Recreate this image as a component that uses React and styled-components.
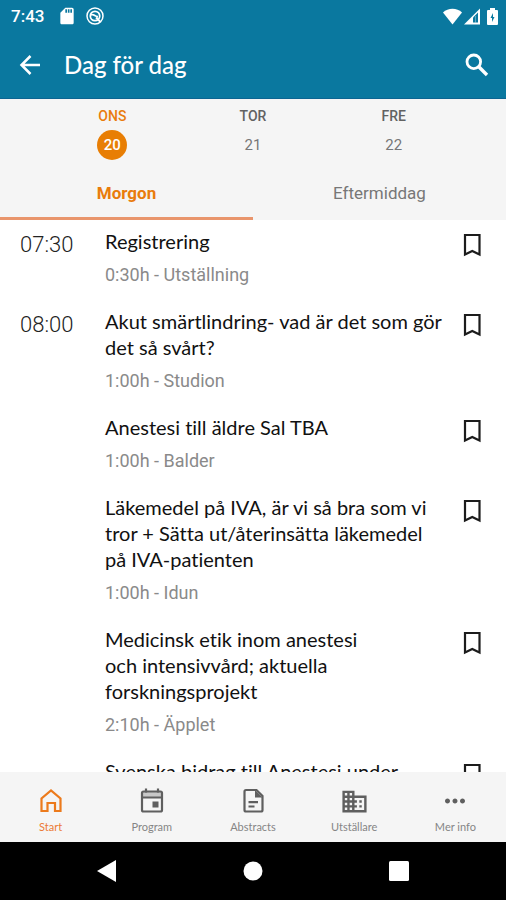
import React, { useState } from "react";
import styled, { createGlobalStyle } from "styled-components";
import { MdBusiness, MdMoreHoriz, MdSdCard } from "react-icons/md";

const ORANGE = "#e97c0c";
const TEAL = "#0a789f";

const GlobalStyle = createGlobalStyle`
  *, *::before, *::after { box-sizing: border-box; }
  body { margin: 0; background: #fff; font-family: Roboto, "Liberation Sans", sans-serif; }
  button { border: 0; padding: 0; background: none; font: inherit; color: inherit; cursor: pointer; }
  h1, h2, p { margin: 0; }
`;

const Screen = styled.div`
  display: flex;
  flex-direction: column;
  height: 100vh;
  overflow: hidden;
`;

const TopArea = styled.header`
  flex: none;
  background: ${TEAL};
  color: #fff;
  border-bottom: 1px solid #0c6592;
`;

const StatusBar = styled.div`
  display: flex;
  align-items: center;
  justify-content: space-between;
  height: 32px;
  padding: 0 8px 0 11px;
  font-size: 17px;
  font-weight: 500;
`;

const StatusGroup = styled.span`
  display: flex;
  align-items: center;
  gap: ${(p) => p.$gap}px;
  svg { display: block; }
`;

const Clock = styled.span`
  margin-right: 4px;
`;

const AppBar = styled.div`
  display: flex;
  align-items: center;
  height: 66px;
  padding: 0 15px 0 16px;
`;

const AppTitle = styled.h1`
  flex: 1;
  margin-left: 20px;
  font: 500 24px/32px Lato, sans-serif;
`;

const IconButton = styled.button`
  display: flex;
  align-items: center;
  justify-content: center;
  width: 28px;
  height: 28px;
  svg { flex: none; }
`;

const Filters = styled.div`
  flex: none;
  background: #f5f5f5;
`;

const Days = styled.div`
  display: grid;
  grid-template-columns: repeat(3, 1fr);
  padding: 7px 42px 0;
`;

const Day = styled.button`
  display: flex;
  flex-direction: column;
  align-items: center;
  gap: 4px;
  font-size: 14px;
  line-height: 20px;
  font-weight: 500;
  color: ${(p) => (p.$active ? ORANGE : "#626262")};
`;

const DayNumber = styled.span`
  width: 30px;
  height: 30px;
  border-radius: 50%;
  font-size: 15px;
  line-height: 30px;
  font-weight: ${(p) => (p.$active ? 500 : 400)};
  color: ${(p) => (p.$active ? "#fff" : "#777")};
  background: ${(p) => (p.$active ? "#e87e04" : "transparent")};
`;

const Tabs = styled.div`
  display: grid;
  grid-template-columns: 1fr 1fr;
  margin-top: 6px;
`;

const Tab = styled.button`
  height: 54px;
  padding-top: 2px;
  font-size: 17px;
  line-height: 24px;
  font-weight: ${(p) => (p.$active ? 700 : 400)};
  color: ${(p) => (p.$active ? ORANGE : "#777")};
  border-bottom: 3px solid ${(p) => (p.$active ? "#e9956c" : "transparent")};
`;

const Schedule = styled.main`
  flex: 1;
  min-height: 0;
  padding-top: 8px;
  overflow-y: auto;
  scrollbar-width: none;
`;

const Session = styled.article`
  display: grid;
  grid-template-columns: 85px 1fr 28px;
  padding: 0 20px 20px;
`;

const Time = styled.time`
  font-size: 22px;
  line-height: 34px;
  font-weight: 300;
  color: #222;
`;

const SessionTitle = styled.h2`
  font: 400 20px/26px Lato, sans-serif;
  font-variant-ligatures: none;
  color: #111;
  white-space: pre;
`;

const SessionMeta = styled.p`
  margin-top: 8px;
  font-size: 18px;
  line-height: 26px;
  font-weight: 400;
  color: #8a8a8a;
`;

const BookmarkButton = styled(IconButton)`
  margin-top: 3px;
  color: #1c1c1c;
`;

const BottomNav = styled.nav`
  flex: none;
  display: grid;
  grid-template-columns: repeat(5, 1fr);
  height: 70px;
  background: #f5f5f5;
`;

const NavItem = styled.button`
  display: flex;
  flex-direction: column;
  align-items: center;
  padding-top: 15px;
  gap: 5px;
  font: 400 11px/14px Lato, sans-serif;
  color: ${(p) => (p.$active ? "#ec7a35" : "#858585")};
`;

const NavIcon = styled.span`
  display: flex;
  align-items: center;
  justify-content: center;
  width: 30px;
  height: 28px;
  color: ${(p) => (p.$active ? "#ec7a1c" : "#5f5f5f")};
  svg { flex: none; }
`;

const SystemNav = styled.nav`
  flex: none;
  display: grid;
  grid-template-columns: repeat(3, 146px);
  justify-content: center;
  height: 58px;
  background: #000;
`;

const SystemButton = styled.button`
  display: flex;
  align-items: center;
  justify-content: center;
  color: #fff;
`;

const Icon = ({ strokeWidth = 2.2, children }) => (
  <svg width="28" height="28" viewBox="0 0 28 28" fill="none" stroke="currentColor" strokeWidth={strokeWidth} aria-hidden="true">
    {children}
  </svg>
);

const BackIcon = () => (
  <Icon strokeWidth={2.5}>
    <path d="M24 14H6M14.500 5L5.500 14l9 9" />
  </Icon>
);

const SearchIcon = () => (
  <Icon strokeWidth={2.800}>
    <circle cx="10.800" cy="10.800" r="6.800" />
    <path d="M15.800 15.800L24 24" strokeWidth="3.400" />
  </Icon>
);

const HomeIcon = () => (
  <Icon>
    <path d="M4.500 24V11.500L14 3.500l9.500 8V24H18v-8h-7.500v8z" />
  </Icon>
);

const CalendarIcon = () => (
  <Icon>
    <path d="M4 5h20v5H4z" fill="currentColor" stroke="none" opacity=".3" />
    <rect x="4" y="4.500" width="20" height="20" rx="1.500" />
    <path d="M4 10.500h20M8 1.500v4M20 1.500v4" />
    <rect x="14.500" y="14.500" width="6" height="6" fill="currentColor" stroke="none" />
  </Icon>
);

const DocumentIcon = () => (
  <Icon>
    <path d="M7 3h10.500l6 6v14a1.500 1.500 0 0 1-1.500 1.500H7A1.500 1.500 0 0 1 5.500 23V4.500A1.500 1.500 0 0 1 7 3z" />
    <path d="M16 3v7.500h7.500z" fill="currentColor" stroke="none" />
    <path d="M9.500 15.200h9.500M9.500 19.500h6" />
  </Icon>
);

const BookmarkIcon = () => (
  <Icon>
    <path d="M7 4h14.500v19.500l-7.250-3.500L7 23.500z" />
  </Icon>
);

const DataSaverIcon = () => (
  <svg width="18" height="18" viewBox="0 0 18 18" fill="none" stroke="currentColor" aria-hidden="true">
    <circle cx="9" cy="9" r="8" strokeWidth="1.500" />
    <circle cx="9" cy="9" r="4.700" strokeWidth="1.800" />
    <path d="M5 8c3-1.500 4 2 7 1.500M10 10.500l4.500 4.500" strokeWidth="1.800" />
  </svg>
);

const WifiIcon = () => (
  <svg width="19" height="17" viewBox="0 0 19 17" fill="currentColor" aria-hidden="true">
    <path d="M0 4.500C5-.5 14-.5 19 4.500L9.500 16.500z" />
  </svg>
);

const SignalIcon = () => (
  <svg width="16" height="17" viewBox="0 0 16 17" aria-hidden="true">
    <path d="M0 16.500L16 .5v16z" fill="currentColor" />
    <path d="M9 9.500l5-5V14.500H9z" fill={TEAL} />
    <path d="M11.500 8v6.500" stroke="currentColor" opacity=".35" />
  </svg>
);

const BatteryIcon = () => (
  <svg width="11" height="17" viewBox="0 0 11 17" aria-hidden="true">
    <path d="M3 0h5v2h2a1 1 0 0 1 1 1v13a1 1 0 0 1-1 1H1a1 1 0 0 1-1-1V3a1 1 0 0 1 1-1h2z" fill="currentColor" />
    <path d="M6 5L3.500 10H5v4l2.500-5H6z" fill={TEAL} />
  </svg>
);

const days = [["ONS", 20], ["TOR", 21], ["FRE", 22]];

const sessions = [
  { time: "07:30", title: "Registrering", meta: "0:30h - Utställning" },
  { time: "08:00", title: "Akut smärtlindring- vad är det som gör\ndet så svårt?", meta: "1:00h - Studion" },
  { title: "Anestesi till äldre Sal TBA", meta: "1:00h - Balder" },
  { title: "Läkemedel på IVA, är vi så bra som vi\ntror + Sätta ut/återinsätta läkemedel\npå IVA-patienten", meta: "1:00h - Idun" },
  { title: "Medicinsk etik inom anestesi\noch intensivvård; aktuella\nforskningsprojekt", meta: "2:10h - Äpplet" },
  { title: "Svenska bidrag till Anestesi under" },
];

const navItems = [
  ["Start", <HomeIcon />],
  ["Program", <CalendarIcon />],
  ["Abstracts", <DocumentIcon />],
  ["Utställare", <MdBusiness size={29} />],
  ["Mer info", <MdMoreHoriz size={30} />],
];

export default function App() {
  const [day, setDay] = useState(20);
  const [tab, setTab] = useState("Morgon");
  const [section, setSection] = useState("Start");

  return (
    <Screen>
      <GlobalStyle />
      <TopArea>
        <StatusBar>
          <StatusGroup $gap={9}>
            <Clock>7:43</Clock>
            <MdSdCard size={20} />
            <DataSaverIcon />
          </StatusGroup>
          <StatusGroup $gap={7}>
            <StatusGroup $gap={2}>
              <WifiIcon />
              <SignalIcon />
            </StatusGroup>
            <BatteryIcon />
          </StatusGroup>
        </StatusBar>
        <AppBar>
          <IconButton aria-label="Tillbaka"><BackIcon /></IconButton>
          <AppTitle>Dag för dag</AppTitle>
          <IconButton aria-label="Sök"><SearchIcon /></IconButton>
        </AppBar>
      </TopArea>

      <Filters>
        <Days>
          {days.map(([name, number]) => (
            <Day key={name} $active={day === number} aria-pressed={day === number} onClick={() => setDay(number)}>
              <span>{name}</span>
              <DayNumber $active={day === number}>{number}</DayNumber>
            </Day>
          ))}
        </Days>
        <Tabs role="tablist">
          {["Morgon", "Eftermiddag"].map((name) => (
            <Tab key={name} role="tab" aria-selected={tab === name} $active={tab === name} onClick={() => setTab(name)}>
              {name}
            </Tab>
          ))}
        </Tabs>
      </Filters>

      <Schedule>
        {sessions.map((s) => (
          <Session key={s.title}>
            <Time>{s.time}</Time>
            <div>
              <SessionTitle>{s.title}</SessionTitle>
              {s.meta && <SessionMeta>{s.meta}</SessionMeta>}
            </div>
            <BookmarkButton aria-label="Spara"><BookmarkIcon /></BookmarkButton>
          </Session>
        ))}
      </Schedule>

      <BottomNav>
        {navItems.map(([name, icon]) => (
          <NavItem key={name} $active={section === name} onClick={() => setSection(name)}>
            <NavIcon $active={section === name}>{icon}</NavIcon>
            <span>{name}</span>
          </NavItem>
        ))}
      </BottomNav>

      <SystemNav>
        <SystemButton aria-label="Bakåt">
          <svg width="20" height="22" viewBox="0 0 20 22" fill="currentColor"><path d="M19 0v22L0 11z" /></svg>
        </SystemButton>
        <SystemButton aria-label="Hem">
          <svg width="20" height="20" viewBox="0 0 20 20" fill="currentColor"><circle cx="10" cy="10" r="9.500" /></svg>
        </SystemButton>
        <SystemButton aria-label="Översikt">
          <svg width="20" height="20" viewBox="0 0 20 20" fill="currentColor"><rect width="20" height="20" rx="1.500" /></svg>
        </SystemButton>
      </SystemNav>
    </Screen>
  );
}
